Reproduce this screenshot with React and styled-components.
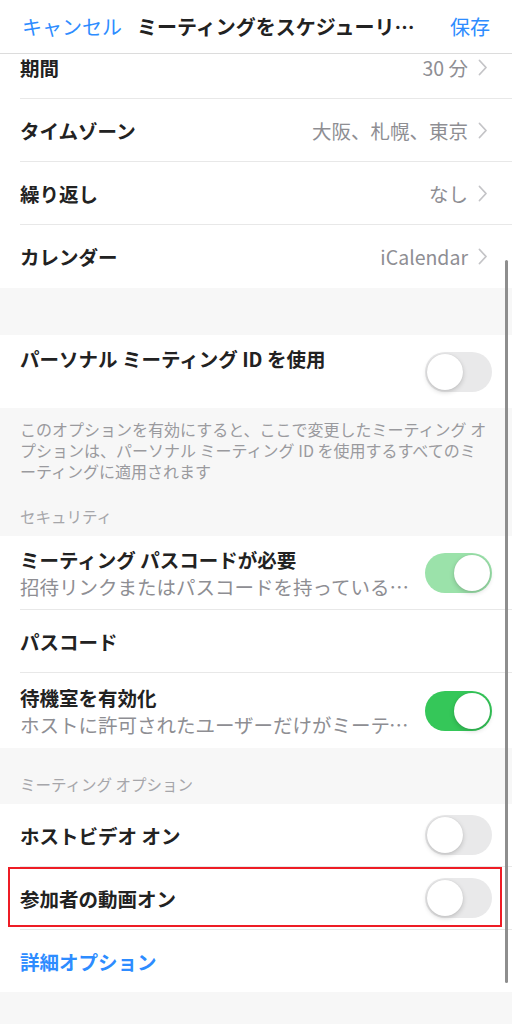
import React from 'react'
import styled, { createGlobalStyle } from 'styled-components'

const Global = createGlobalStyle`
  body {
    margin: 0;
    background: #f7f7f7;
    font-family: "Noto Sans CJK JP", "Noto Sans", sans-serif;
  }
`

const Screen = styled.div`
  position: relative;
  width: 512px;
  height: 1024px;
  overflow: hidden;
  background: #f7f7f7;
`

const Header = styled.header`
  position: relative;
  z-index: 2;
  height: 54px;
  box-sizing: border-box;
  display: flex;
  align-items: center;
  gap: 15px;
  padding: 0 22px;
  background: #fff;
  border-bottom: 1px solid #dcdcdc;
  font-size: 20px;
  line-height: 28px;
`

const HeaderButton = styled.span`
  flex-shrink: 0;
  color: #2d8cff;
  white-space: nowrap;
`

const HeaderTitle = styled.span`
  flex: 1;
  min-width: 0;
  margin-right: 7px;
  color: #222;
  font-weight: 700;
  white-space: nowrap;
  overflow: hidden;
  text-overflow: ellipsis;
`

const Scroll = styled.div`
  margin-top: -18px;
`

const Group = styled.section`
  background: #fff;
  margin-top: ${p => p.$gap || 0}px;
`

const Row = styled.div`
  position: relative;
  padding-left: 20px;
  background: #fff;
`

const RowBody = styled.div`
  display: flex;
  align-items: center;
  box-sizing: border-box;
  height: ${p => p.$h || 63}px;
  padding-right: 20px;
  border-bottom: ${p => (p.$last ? 'none' : '1px solid #e8e8e8')};
`

const TextBlock = styled.div`
  flex: 1;
  min-width: 0;
  margin-right: 12px;
`

const Title = styled.div`
  font-size: 19.5px;
  line-height: 27px;
  font-weight: 700;
  color: ${p => (p.$link ? '#2d8cff' : '#222')};
  white-space: nowrap;
`

const Sub = styled.div`
  height: 27px;
  font-size: 19.5px;
  line-height: 27px;
  color: #8e8e93;
  white-space: nowrap;
  overflow: hidden;
  text-overflow: ellipsis;
`

const Value = styled.span`
  font-size: 19.5px;
  line-height: 27px;
  color: #8e8e93;
  white-space: nowrap;
`

const Chevron = styled.svg`
  flex-shrink: 0;
  margin: 0 4px 0 10px;
`

const Toggle = styled.span`
  position: relative;
  flex-shrink: 0;
  width: 67px;
  height: 40px;
  border-radius: 20px;
  background: ${p => (p.$on ? (p.$dim ? '#9be2aa' : '#35c759') : '#e9e9ea')};

  &::after {
    content: '';
    position: absolute;
    top: 2px;
    left: ${p => (p.$on ? '29px' : '2px')};
    width: 36px;
    height: 36px;
    border-radius: 50%;
    background: #fff;
    box-shadow: 0 2px 5px rgba(0, 0, 0, 0.18), 0 0 1px rgba(0, 0, 0, 0.12);
  }
`

const Note = styled.p`
  margin: 0;
  padding: 11px 20px 0;
  font-size: 16px;
  line-height: 21px;
  color: #9a9a9e;
  white-space: nowrap;
`

const SectionHeader = styled.div`
  padding: ${p => p.$top || 24}px 20px 10px;
  font-size: 15.5px;
  line-height: 20px;
  color: #a6a6aa;
`

const Highlight = styled.div`
  position: absolute;
  top: 0;
  left: 8px;
  right: 10px;
  bottom: 3px;
  border: 2px solid #ee1c25;
  pointer-events: none;
`

const ScrollBar = styled.div`
  position: absolute;
  top: 260px;
  right: 4px;
  width: 3px;
  height: 723px;
  border-radius: 2px;
  background: #8e8e8e;
`

function Arrow() {
  return (
    <Chevron width="10" height="17" viewBox="0 0 10 17">
      <polyline points="1.5,1.5 8,8.5 1.5,15.5" fill="none" stroke="#c4c4c7" strokeWidth="1.8" strokeLinecap="round" strokeLinejoin="round" />
    </Chevron>
  )
}

function ValueRow({ title, value, last }) {
  return (
    <Row>
      <RowBody $last={last}>
        <TextBlock><Title>{title}</Title></TextBlock>
        <Value>{value}</Value>
        <Arrow />
      </RowBody>
    </Row>
  )
}

function SwitchRow({ title, sub, on, dim, last, h, marked }) {
  return (
    <Row>
      <RowBody $last={last} $h={h}>
        <TextBlock>
          <Title>{title}</Title>
          {sub !== undefined && <Sub>{sub}</Sub>}
        </TextBlock>
        <Toggle $on={on} $dim={dim} />
      </RowBody>
      {marked && <Highlight />}
    </Row>
  )
}

export default function App() {
  return (
    <Screen>
      <Global />
      <Header>
        <HeaderButton>キャンセル</HeaderButton>
        <HeaderTitle>ミーティングをスケジューリング</HeaderTitle>
        <HeaderButton>保存</HeaderButton>
      </Header>

      <Scroll>
        <Group>
          <ValueRow title="期間" value="30 分" />
          <ValueRow title="タイムゾーン" value="大阪、札幌、東京" />
          <ValueRow title="繰り返し" value="なし" />
          <ValueRow title="カレンダー" value="iCalendar" last />
        </Group>

        <Group $gap={47}>
          <SwitchRow title="パーソナル ミーティング ID を使用" sub="" h={73} last />
        </Group>

        <Note>
          このオプションを有効にすると、ここで変更したミーティング オ<br />
          プションは、パーソナル ミーティング ID を使用するすべてのミ<br />
          ーティングに適用されます
        </Note>
        <SectionHeader>セキュリティ</SectionHeader>

        <Group>
          <SwitchRow
            title="ミーティング パスコードが必要"
            sub="招待リンクまたはパスコードを持っているユーザーのみ参加できます"
            on
            dim
            h={74}
          />
          <Row>
            <RowBody>
              <TextBlock><Title>パスコード</Title></TextBlock>
            </RowBody>
          </Row>
          <SwitchRow
            title="待機室を有効化"
            sub="ホストに許可されたユーザーだけがミーティングに参加できます"
            on
            h={75}
            last
          />
        </Group>

        <SectionHeader $top={26}>ミーティング オプション</SectionHeader>

        <Group>
          <SwitchRow title="ホストビデオ オン" />
          <SwitchRow title="参加者の動画オン" marked />
          <Row>
            <RowBody $h={62} $last>
              <TextBlock><Title $link>詳細オプション</Title></TextBlock>
            </RowBody>
          </Row>
        </Group>
      </Scroll>

      <ScrollBar />
    </Screen>
  )
}
